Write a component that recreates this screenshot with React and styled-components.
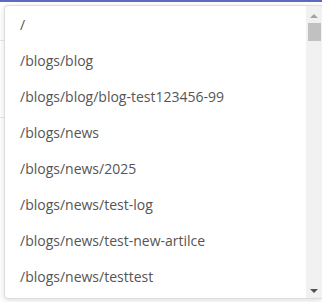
import React from "react";
import styled, { createGlobalStyle } from "styled-components";

const Global = createGlobalStyle`
  html, body { margin: 0; padding: 0; background: #fff; }
  body { font-family: "Open Sans", "Noto Sans", sans-serif; width: 322px; height: 302px; overflow: hidden; }
`;

const Page = styled.div`
  position: relative;
  width: 322px;
  height: 302px;
  border-top: 2px solid #5c6bc0;
  box-sizing: border-box;
  overflow: hidden;
`;

const BackRow = styled.div`
  height: ${(p) => p.$h}px;
  border-bottom: 1px solid #e6e6e6;
  box-sizing: border-box;
`;

const BackText = styled.div`
  padding: 0 0 0 40px;
  font-size: 14px;
  line-height: 19px;
  color: #444;
  margin-top: 180px;
`;

const Menu = styled.div`
  position: absolute;
  top: 3px;
  left: 4px;
  right: 0;
  height: 292px;
  display: flex;
  background: #fff;
  border: 1px solid #dcdcdc;
  border-right: none;
  border-radius: 4px 0 0 4px;
  box-shadow: 0 2px 6px rgba(0, 0, 0, 0.12);
`;

const List = styled.ul`
  flex: 1;
  list-style: none;
  margin: 0;
  padding: 1px 0 0;
  overflow: hidden;
`;

const Item = styled.li`
  height: 36px;
  line-height: 36px;
  padding-left: 15px;
  font-size: 14px;
  color: #555;
  white-space: nowrap;
`;

const Track = styled.div`
  width: 16px;
  background: #f1f1f1;
  display: flex;
  flex-direction: column;
  align-items: center;
`;

const Arrow = styled.div`
  width: 0;
  height: 0;
  border-left: 4px solid transparent;
  border-right: 4px solid transparent;
  ${(p) =>
    p.$down
      ? "border-top: 4px solid #505050; margin-top: auto; margin-bottom: 5px;"
      : "border-bottom: 4px solid #a3a3a3; margin-top: 8px;"}
`;

const Thumb = styled.div`
  width: 13px;
  height: 18px;
  background: #c1c1c1;
  margin-top: 5px;
`;

const items = [
  "/",
  "/blogs/blog",
  "/blogs/blog/blog-test123456-99",
  "/blogs/news",
  "/blogs/news/2025",
  "/blogs/news/test-log",
  "/blogs/news/test-new-artilce",
  "/blogs/news/testtest",
];

export default function App() {
  return (
    <>
      <Global />
      <Page>
        <BackRow $h={39} />
        <BackRow $h={77} />
        <BackText>/ blogs / news / test</BackText>
        <Menu>
          <List>
            {items.map((t) => (
              <Item key={t}>{t}</Item>
            ))}
          </List>
          <Track>
            <Arrow />
            <Thumb />
            <Arrow $down />
          </Track>
        </Menu>
      </Page>
    </>
  );
}
